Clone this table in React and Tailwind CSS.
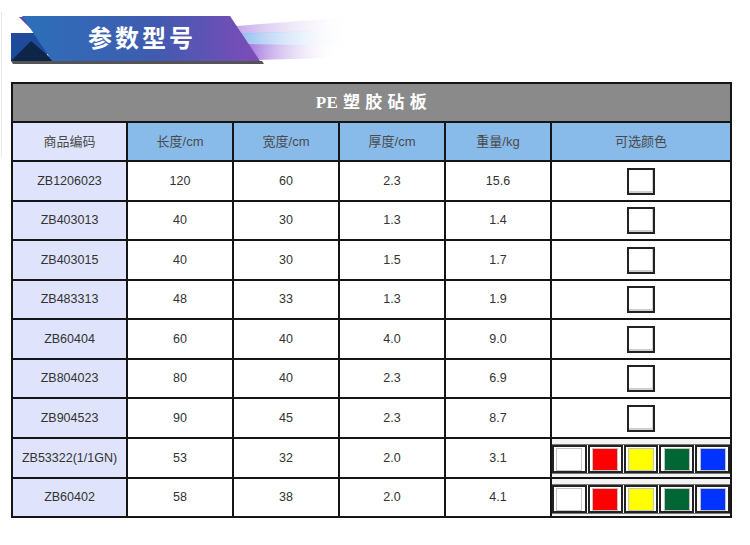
import React from "react";

const rows = [
  ["ZB1206023", "120", "60", "2.3", "15.6", "one", 40],
  ["ZB403013", "40", "30", "1.3", "1.4", "one", 39],
  ["ZB403015", "40", "30", "1.5", "1.7", "one", 40],
  ["ZB483313", "48", "33", "1.3", "1.9", "one", 39],
  ["ZB60404", "60", "40", "4.0", "9.0", "one", 40],
  ["ZB804023", "80", "40", "2.3", "6.9", "one", 39],
  ["ZB904523", "90", "45", "2.3", "8.7", "one", 40],
  ["ZB53322(1/1GN)", "53", "32", "2.0", "3.1", "multi", 40],
  ["ZB60402", "58", "38", "2.0", "4.1", "multi", 39],
];

const swatches = ["#ffffff", "#ff0000", "#ffff00", "#006633", "#0033ff"];

const cols = "grid grid-cols-[113px_106px_106px_106px_106px_180px]";

function Banner() {
  return (
    <div className="relative h-[82px]">
      <svg width="370" height="72" className="absolute left-0 top-0">
        <defs>
          <linearGradient id="main" x1="0" x2="1" y1="0" y2="0">
            <stop offset="0" stopColor="#2c70b9" />
            <stop offset="0.55" stopColor="#3f5bb0" />
            <stop offset="1" stopColor="#7f4bb9" />
          </linearGradient>
          <linearGradient id="s1" x1="0" x2="1">
            <stop offset="0" stopColor="#c4a9ea" />
            <stop offset="1" stopColor="#ffffff" stopOpacity="0" />
          </linearGradient>
          <linearGradient id="s2" x1="0" x2="1">
            <stop offset="0" stopColor="#93bdf0" />
            <stop offset="1" stopColor="#ffffff" stopOpacity="0" />
          </linearGradient>
          <linearGradient id="s3" x1="0" x2="1">
            <stop offset="0" stopColor="#9f72dc" />
            <stop offset="1" stopColor="#ffffff" stopOpacity="0" />
          </linearGradient>
        </defs>
        <polygon points="236,26 340,18 352,30 242,34" fill="url(#s1)" />
        <polygon points="240,33 352,30 350,46 246,45" fill="url(#s2)" />
        <polygon points="246,44 340,46 330,58 254,60" fill="url(#s3)" />
        <polygon points="11,61 262,61 264,64 13,64" fill="#555" />
        <rect x="11" y="33" width="36" height="28" fill="#1f4a9c" />
        <polygon points="11,61 31,41 54,61" fill="#0d2547" />
        <polygon points="19,17 26,17 31,29" fill="#6a3fa8" />
        <polygon points="22,16 230,16 260,61 52,61" fill="url(#main)" />
      </svg>
      <div className="absolute left-[88px] top-[22px] text-[24px] font-bold leading-[30px] tracking-[3px] text-white [font-family:'Noto_Sans_CJK_SC',sans-serif]">
        参数型号
      </div>
      <div className="absolute left-[1px] top-[12px] h-[145px] w-px bg-[#e8e8e8]" />
    </div>
  );
}

function ColorCell({ kind }) {
  if (kind === "one") {
    return (
      <div className="flex h-full items-center justify-center">
        <div className="h-[27px] w-[28px] border-2 border-[#222] bg-white shadow-[inset_-1px_-2px_0_#cfcfcf]" />
      </div>
    );
  }
  return (
    <div className="flex h-full flex-col">
      <div className="h-[6px] border-b border-[#777] bg-[#f3f3f3]" />
      <div className="flex gap-px">
        {swatches.map((c) => (
          <div
            key={c}
            className="flex h-[28px] flex-1 items-center justify-center border-2 border-[#222] bg-white"
          >
            <div className="h-[23px] w-[26px] border border-[#c4c4c4]" style={{ background: c }} />
          </div>
        ))}
      </div>
      <div className="flex-1 border-t border-[#777] bg-[#f3f3f3]" />
    </div>
  );
}

export default function App() {
  return (
    <div className="h-[545px] w-[750px] bg-white [font-family:'Liberation_Sans','Noto_Sans_CJK_SC',sans-serif]">
      <Banner />
      <div className="ml-[11px] w-[721px] border-2 border-[#151515]">
        <div className="flex h-[37px] items-center justify-center bg-[#8a8a8a] text-[17px] font-bold tracking-[0.5px] text-white [font-family:'Liberation_Serif','Noto_Sans_CJK_SC',serif]">
          PE 塑 胶 砧 板
        </div>
        <div className={`${cols} h-[39px] border-t-2 border-[#151515] text-[13px] text-[#4a4a4a]`}>
          <div className="flex items-center justify-center bg-[#dfe4fc]">商品编码</div>
          {["长度/cm", "宽度/cm", "厚度/cm", "重量/kg", "可选颜色"].map((h) => (
            <div key={h} className="flex items-center justify-center border-l-2 border-[#151515] bg-[#89bbea]">
              {h}
            </div>
          ))}
        </div>
        {rows.map((r) => (
          <div
            key={r[0]}
            className={`${cols} border-t-2 border-[#151515] text-[12.5px] text-[#333]`}
            style={{ height: r[6] }}
          >
            <div className="flex items-center justify-center bg-[#dfe4fc]">{r[0]}</div>
            {r.slice(1, 5).map((v, i) => (
              <div key={i} className="flex items-center justify-center border-l-2 border-[#151515]">
                {v}
              </div>
            ))}
            <div className="border-l-2 border-[#151515]">
              <ColorCell kind={r[5]} />
            </div>
          </div>
        ))}
      </div>
    </div>
  );
}
